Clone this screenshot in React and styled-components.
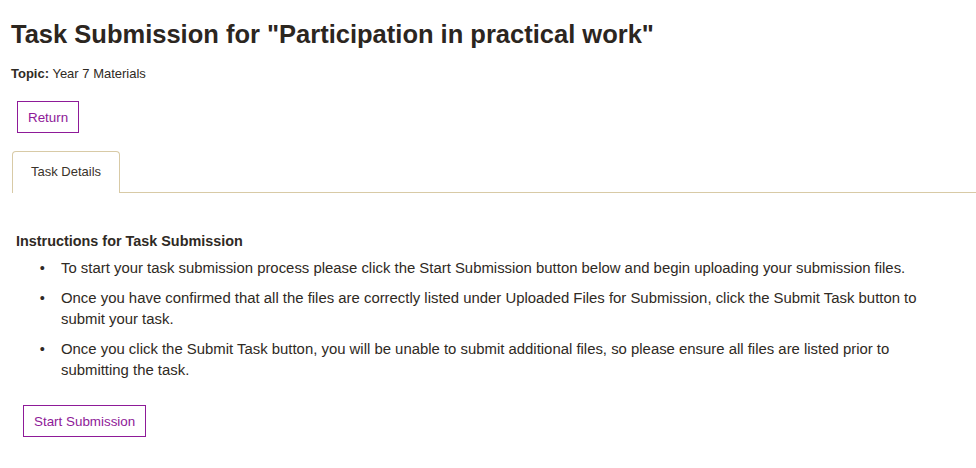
import React from 'react'
import styled, { createGlobalStyle } from 'styled-components'

const GlobalStyle = createGlobalStyle`
    body{
        margin:0;
        background:#fff;
        font-family:"Liberation Sans", Arial, sans-serif;
        color:#2f2a24;
    }
`

const steps = [
    'To start your task submission process please click the Start Submission button below and begin uploading your submission files.',
    'Once you have confirmed that all the files are correctly listed under Uploaded Files for Submission, click the Submit Task button to submit your task.',
    'Once you click the Submit Task button, you will be unable to submit additional files, so please ensure all files are listed prior to submitting the task.',
]

const App = () => {
    return (
        <Page>
            <GlobalStyle />
            <Title>Task Submission for "Participation in practical work"</Title>
            <Topic><b>Topic:</b> Year 7 Materials</Topic>
            <OutlineButton $left={6} $top={19}>Return</OutlineButton>

            <Tabs>
                <Tab>Task Details</Tab>
            </Tabs>

            <Panel>
                <Heading>Instructions for Task Submission</Heading>
                <Steps>
                    {steps.map((s, i) => <li key={i}>{s}</li>)}
                </Steps>
                <OutlineButton $left={7} $top={24}>Start Submission</OutlineButton>
            </Panel>
        </Page>
    )
}

export default App

const Page = styled.div`
    padding:19px 0 0 11px;
`

const Title = styled.h1`
    margin:0;
    font-size:25.5px;
    line-height:30px;
    font-weight:bold;
    color:#2c261f;
`

const Topic = styled.div`
    margin-top:17px;
    font-size:13px;
    line-height:16px;
`

const OutlineButton = styled.button`
    display:block;
    margin-left:${p => p.$left}px;
    margin-top:${p => p.$top}px;
    height:32px;
    padding:0 10px;
    background:#fff;
    border:1px solid #8e1a98;
    color:#8e1a98;
    font-family:"Liberation Sans", Arial, sans-serif;
    font-size:13.4px;
    cursor:pointer;
`

const Tabs = styled.div`
    display:flex;
    margin-top:18px;
    margin-left:1px;
    border-bottom:1px solid #d8caa6;
`

const Tab = styled.div`
    padding:0 18px;
    height:40px;
    line-height:40px;
    font-size:13px;
    color:#3a332b;
    background:#fff;
    border:1px solid #d8caa6;
    border-bottom:none;
    border-radius:4px 4px 0 0;
    margin-bottom:-1px;
    padding-bottom:1px;
`

const Panel = styled.div`
    padding:38px 0 0 5px;
`

const Heading = styled.h3`
    margin:0;
    font-size:14.4px;
    line-height:20px;
    font-weight:bold;
`

const Steps = styled.ul`
    margin:7px 0 0;
    padding:0 40px 0 45px;
    font-size:14.9px;
    line-height:21px;

    li{
        margin-bottom:9px;
    }

    li::marker{
        content:"\\2022\\00a0\\00a0\\00a0\\00a0";
        font-size:14.5px;
    }
`
